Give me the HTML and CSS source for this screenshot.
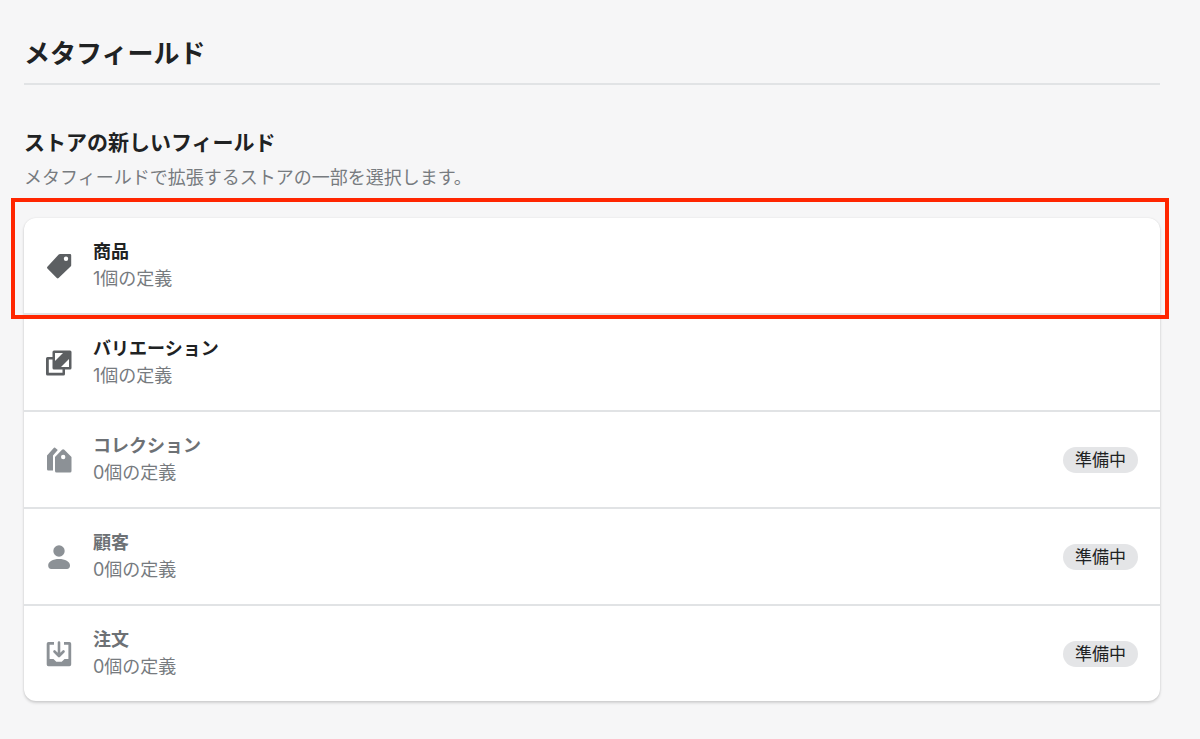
FILE: index.html
```
<!DOCTYPE html>
<html lang="ja">
  <head>
    <meta charset="UTF-8" />
    <meta name="viewport" content="width=device-width, initial-scale=1.0" />
    <title>メタフィールド</title>
    <link rel="stylesheet" href="styles.css">
  </head>
  <body>
    <main class="page">
      <h1 class="page-title">メタフィールド</h1>

      <section>
        <h2 class="section-title">ストアの新しいフィールド</h2>
        <p class="section-text">メタフィールドで拡張するストアの一部を選択します。</p>

        <ul class="list">
          <li class="item marked">
            <a class="item-link" href="#products">
              <svg class="icon" viewBox="0 0 28 28" aria-hidden="true">
                <path fill-rule="evenodd" d="M13.7 2.5a2 2 0 0 1 1.3-.5H25a1.2 1.2 0 0 1 1.2 1.2v10a2 2 0 0 1-.6 1.4L13.6 26a1.3 1.3 0 0 1-1.8 0L2.4 16.6a1.3 1.3 0 0 1 0-1.8zM21 9a2.200 2.200 0 1 0 0-4.400a2.200 2.200 0 0 0 0 4.400z" />
              </svg>
              <span class="item-body">
                <span class="item-title">商品</span>
                <span class="item-text">1個の定義</span>
              </span>
            </a>
          </li>
          <li class="item">
            <a class="item-link" href="#variants">
              <svg class="icon" viewBox="0 0 28 28" aria-hidden="true">
                <path fill-rule="evenodd" d="M9 1.500h16a1.500 1.500 0 0 1 1.500 1.500v16a1.500 1.500 0 0 1-1.500 1.500H9A1.500 1.500 0 0 1 7.500 19V3A1.500 1.500 0 0 1 9 1.500zM10 4v8l8-8zM24 10v8h-8z" />
                <path d="M2.500 8H8v2.500H3.800v13.300H17.500V20H20v5a1.500 1.500 0 0 1-1.500 1.500h-16A1.500 1.500 0 0 1 1 25V9.500A1.500 1.500 0 0 1 2.500 8z" />
              </svg>
              <span class="item-body">
                <span class="item-title">バリエーション</span>
                <span class="item-text">1個の定義</span>
              </span>
            </a>
          </li>
          <li class="item disabled">
            <div class="item-link">
              <svg class="icon" viewBox="0 0 28 28" aria-hidden="true">
                <path d="M2 9.500L8.500 2.200a1.500 1.500 0 0 1 2.200 0L12.800 4L8 9.500V24.500H3.300A1.300 1.300 0 0 1 2 23.200z" />
                <path fill-rule="evenodd" d="M10 11L17 3.800a1.600 1.600 0 0 1 2.300 0L26.500 11v14a1.500 1.500 0 0 1-1.500 1.500H11.500A1.500 1.500 0 0 1 10 25zM18.200 13.200a2.200 2.200 0 1 0 0-4.400a2.200 2.200 0 0 0 0 4.400z" />
              </svg>
              <div class="item-body">
                <span class="item-title">コレクション</span>
                <span class="item-text">0個の定義</span>
              </div>
              <span class="badge">準備中</span>
            </div>
          </li>
          <li class="item disabled">
            <div class="item-link">
              <svg class="icon" viewBox="0 0 28 28" aria-hidden="true">
                <circle cx="14" cy="8" r="5.700" />
                <path d="M3.200 22.500C3.200 18.500 8 16 14 16s11 2.500 11 6.500c0 2-1.200 3.500-3 3.500H6.200c-1.800 0-3-1.500-3-3.500z" />
              </svg>
              <div class="item-body">
                <span class="item-title">顧客</span>
                <span class="item-text">0個の定義</span>
              </div>
              <span class="badge">準備中</span>
            </div>
          </li>
          <li class="item disabled">
            <div class="item-link">
              <svg class="icon" viewBox="0 0 28 28" aria-hidden="true">
                <path fill-rule="evenodd" d="M3.500 2H9v2.700H4.600V19H8.500l2.800 2.800h5.400L19.500 19h3.900V4.700H19V2h5.500A1.800 1.800 0 0 1 26.200 3.800v20.600a1.800 1.800 0 0 1-1.800 1.800h-21a1.800 1.800 0 0 1-1.700-1.800V3.800A1.800 1.800 0 0 1 3.500 2z" />
                <path class="arrow" d="M14 2.500v13M9.500 11.500l4.500 4.500 4.500-4.500" />
              </svg>
              <div class="item-body">
                <span class="item-title">注文</span>
                <span class="item-text">0個の定義</span>
              </div>
              <span class="badge">準備中</span>
            </div>
          </li>
        </ul>
      </section>
    </main>
  </body>
</html>
```
FILE: styles.css
```
* {
  box-sizing: border-box;
  margin: 0;
  padding: 0;
}
body {
  background: #f6f6f7;
  color: #202223;
  font-family: Inter, "Noto Sans CJK JP", sans-serif;
  font-size: 18px;
  line-height: 27px;
}
.page {
  padding: 35px 40px 36px 24px;
}
.page-title {
  padding-bottom: 10px;
  margin-bottom: 44px;
  border-bottom: 2px solid #e1e3e5;
  font-size: 26px;
  line-height: 38px;
}
.section-title {
  font-size: 21px;
  line-height: 28px;
}
.section-text {
  margin: 7px 0 27px;
  color: #777b7f;
}
.list {
  list-style: none;
  border-radius: 12px;
  background: #fff;
  box-shadow: 0 0 2px rgba(23, 24, 24, 0.1), 0 2px 3px rgba(0, 0, 0, 0.15);
}
.item + .item {
  border-top: 2px solid #e1e3e5;
}
.item-link {
  display: flex;
  align-items: center;
  gap: 20px;
  padding: 20px 22px 21px 21px;
  color: inherit;
  text-decoration: none;
}
.item-body {
  flex: 1;
}
.item-title,
.item-text {
  display: block;
}
.item-title {
  font-weight: bold;
}
.item-text {
  color: #777b7f;
}
.icon,
.badge {
  margin-top: 2px;
}
.icon {
  width: 28px;
  height: 28px;
  fill: #5c5f62;
}
.arrow {
  fill: none;
  stroke: #8c9196;
  stroke-width: 2.6;
  stroke-linecap: round;
  stroke-linejoin: round;
}
.disabled .icon {
  fill: #8c9196;
}
.disabled .arrow {
  fill: none;
}
.disabled .item-title {
  color: #6d7175;
}
.badge {
  padding: 0 12px;
  border-radius: 13px;
  background: #e4e5e7;
  font-size: 17px;
  line-height: 26px;
}

/* red frame around the first row */
.marked {
  position: relative;
}
.marked::after {
  content: "";
  position: absolute;
  top: -20px;
  right: -9px;
  bottom: -6px;
  left: -13px;
  border: 4px solid #ff2600;
  pointer-events: none;
}
```
